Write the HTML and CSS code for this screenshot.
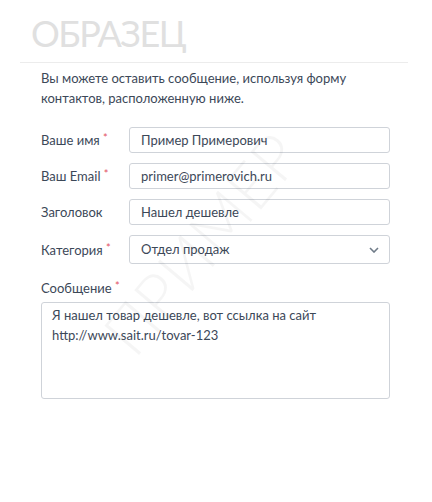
FILE: index.html
```html
<!DOCTYPE html>
<html lang="ru">
<head>
<meta charset="utf-8">
<link rel="stylesheet" href="styles.css">
</head>
<body>
<div class="page">
  <h1 class="title">ОБРАЗЕЦ</h1>
  <div class="content">
    <p class="intro">Вы можете оставить сообщение, используя форму контактов, расположенную ниже.</p>
    <form class="form">
      <div class="row">
        <label class="label">Ваше имя <span class="req">*</span></label>
        <div class="field">Пример Примерович</div>
      </div>
      <div class="row">
        <label class="label">Ваш Email <span class="req">*</span></label>
        <div class="field">primer@primerovich.ru</div>
      </div>
      <div class="row">
        <label class="label">Заголовок</label>
        <div class="field">Нашел дешевле</div>
      </div>
      <div class="row">
        <label class="label">Категория <span class="req">*</span></label>
        <div class="field select">Отдел продаж
          <svg class="chev" width="10" height="6" viewBox="0 0 10 6"><path d="M1 1 L5 5 L9 1" fill="none" stroke="#6f7b88" stroke-width="1.6"/></svg>
        </div>
      </div>
      <div class="block">
        <label class="label">Сообщение <span class="req">*</span></label>
        <div class="textarea">Я нашел товар дешевле, вот ссылка на сайт<br>http://www.sait.ru/tovar-123</div>
      </div>
    </form>
  </div>
  <div class="watermark">ПРИМЕР</div>
</div>
</body>
</html>
```
FILE: styles.css
```css
* { box-sizing: border-box; }
html, body { margin: 0; padding: 0; background: #fff; }
body { font-family: Lato, "Noto Sans", sans-serif; color: #3c4858; }
.page { position: relative; width: 432px; height: 502px; overflow: hidden; }
.title {
  margin: 0 24px 0 20px;
  padding: 9px 0 5px 11px;
  font-size: 36px;
  line-height: 48px;
  font-weight: 400;
  color: #e0e0e0;
  border-bottom: 1px solid #ececec;
  letter-spacing: -1.5px;
}
.content { padding: 5px 42px 0 41px; }
.intro { margin: 0 0 19px 0; font-size: 13px; line-height: 20px; color: #3c4858; }
.form { display: flex; flex-direction: column; gap: 10px; }
.row { display: flex; align-items: center; }
.label { width: 88px; font-size: 13px; color: #3c4858; }
.req { color: #e2525f; font-size: 11px; position: relative; top: -3px; }
.field {
  flex: 1;
  height: 26px;
  border: 1px solid #cfd3d9;
  border-radius: 3px;
  padding: 0 11px;
  font-size: 13px;
  line-height: 24px;
  color: #3c4858;
}
.select { height: 29px; line-height: 27px; display: flex; justify-content: space-between; align-items: center; padding-right: 10px; }
.chev { display: block; }
.block { display: flex; flex-direction: column; gap: 6px; margin-top: 6px; }
.textarea {
  height: 97px;
  border: 1px solid #cfd3d9;
  border-radius: 3px;
  padding: 2px 10px;
  font-size: 13px;
  line-height: 20px;
  color: #3c4858;
}
.watermark {
  position: absolute;
  left: 70px;
  top: 213px;
  width: 260px;
  text-align: center;
  font-size: 64px;
  line-height: 64px;
  font-weight: 300;
  color: rgba(0,0,0,0.04);
  transform: rotate(-50deg);
  pointer-events: none;
}
```
